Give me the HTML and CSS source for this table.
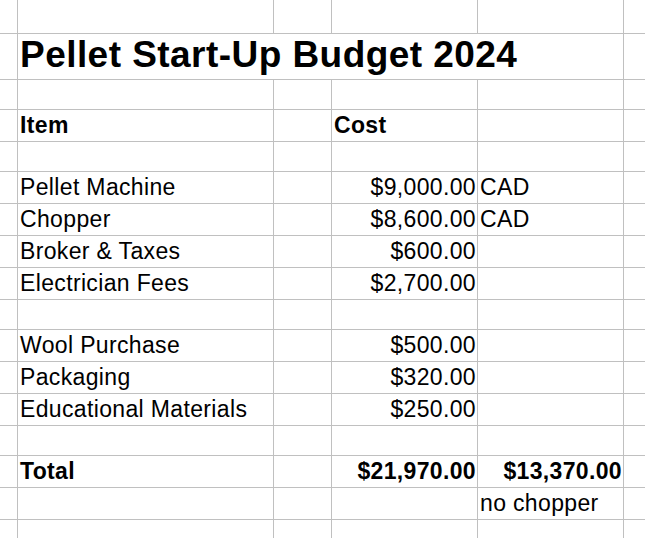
FILE: index.html
```html
<!DOCTYPE html>
<html>
<head>
<meta charset="utf-8">
<link rel="stylesheet" href="styles.css">
</head>
<body>
<div class="sheet">
  <!-- row 1 -->
  <div class="c"></div><div class="c"></div><div class="c"></div><div class="c"></div><div class="c"></div><div class="c"></div>
  <!-- row 2 -->
  <div class="c"></div><div class="c title span4">Pellet Start-Up Budget 2024</div><div class="c"></div>
  <!-- row 3 -->
  <div class="c"></div><div class="c"></div><div class="c"></div><div class="c"></div><div class="c"></div><div class="c"></div>
  <!-- row 4 -->
  <div class="c"></div><div class="c b">Item</div><div class="c"></div><div class="c b">Cost</div><div class="c"></div><div class="c"></div>
  <!-- row 5 -->
  <div class="c"></div><div class="c"></div><div class="c"></div><div class="c"></div><div class="c"></div><div class="c"></div>
  <!-- row 6 -->
  <div class="c"></div><div class="c">Pellet Machine</div><div class="c"></div><div class="c r">$9,000.00</div><div class="c">CAD</div><div class="c"></div>
  <!-- row 7 -->
  <div class="c"></div><div class="c">Chopper</div><div class="c"></div><div class="c r">$8,600.00</div><div class="c">CAD</div><div class="c"></div>
  <!-- row 8 -->
  <div class="c"></div><div class="c">Broker &amp; Taxes</div><div class="c"></div><div class="c r">$600.00</div><div class="c"></div><div class="c"></div>
  <!-- row 9 -->
  <div class="c"></div><div class="c">Electrician Fees</div><div class="c"></div><div class="c r">$2,700.00</div><div class="c"></div><div class="c"></div>
  <!-- row 10 -->
  <div class="c"></div><div class="c"></div><div class="c"></div><div class="c"></div><div class="c"></div><div class="c"></div>
  <!-- row 11 -->
  <div class="c"></div><div class="c">Wool Purchase</div><div class="c"></div><div class="c r">$500.00</div><div class="c"></div><div class="c"></div>
  <!-- row 12 -->
  <div class="c"></div><div class="c">Packaging</div><div class="c"></div><div class="c r">$320.00</div><div class="c"></div><div class="c"></div>
  <!-- row 13 -->
  <div class="c"></div><div class="c">Educational Materials</div><div class="c"></div><div class="c r">$250.00</div><div class="c"></div><div class="c"></div>
  <!-- row 14 -->
  <div class="c"></div><div class="c"></div><div class="c"></div><div class="c"></div><div class="c"></div><div class="c"></div>
  <!-- row 15 -->
  <div class="c"></div><div class="c b">Total</div><div class="c"></div><div class="c r b">$21,970.00</div><div class="c r b">$13,370.00</div><div class="c"></div>
  <!-- row 16 -->
  <div class="c"></div><div class="c"></div><div class="c"></div><div class="c"></div><div class="c">no chopper</div><div class="c"></div>
  <!-- row 17 -->
  <div class="c"></div><div class="c"></div><div class="c"></div><div class="c"></div><div class="c"></div><div class="c"></div>
</div>
</body>
</html>
```
FILE: styles.css
```css
html, body {
  margin: 0;
  padding: 0;
  background: #ffffff;
  overflow: hidden;
}
.sheet {
  display: grid;
  width: 645px;
  height: 538px;
  grid-template-columns: 17px 255px 57px 145px 145px 21px;
  grid-template-rows: 33px 45px 29px 31px 29px 31px 31px 31px 31px 29px 31px 31px 31px 29px 31px 31px 18px;
  gap: 1px;
  background: #c0c0c0;
  font-family: "Liberation Sans", Arial, sans-serif;
  color: #000000;
}
.c {
  background: #ffffff;
  display: flex;
  align-items: flex-end;
  font-size: 23px;
  letter-spacing: 0.35px;
  line-height: normal;
  padding: 0 2px 2px 2px;
  white-space: nowrap;
  overflow: hidden;
  min-width: 0;
}
.r {
  justify-content: flex-end;
  padding-right: 1px;
}
.b {
  font-weight: bold;
}
.title {
  font-size: 37px;
  letter-spacing: 0.45px;
  font-weight: bold;
  padding-bottom: 3px;
}
.span4 {
  grid-column: span 4;
}
```
